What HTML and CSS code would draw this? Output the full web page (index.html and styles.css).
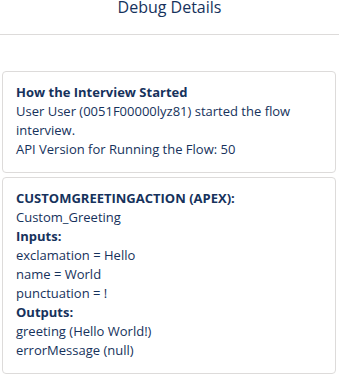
FILE: index.html
```html
<!DOCTYPE html>
<html lang="en">
<head>
<meta charset="utf-8">
<title>Debug Details</title>
<link rel="stylesheet" href="styles.css">
</head>
<body>
<header class="header">
  <h2 class="title">Debug Details</h2>
</header>
<main class="content">
  <section class="card">
    <div class="label">How the Interview Started</div>
    <div>User User (0051F00000lyz81) started the flow interview.</div>
    <div>API Version for Running the Flow: 50</div>
  </section>
  <section class="card">
    <div class="label">CUSTOMGREETINGACTION (APEX):</div>
    <div>Custom_Greeting</div>
    <div class="label">Inputs:</div>
    <div>exclamation = Hello</div>
    <div>name = World</div>
    <div>punctuation = !</div>
    <div class="label">Outputs:</div>
    <div>greeting (Hello World!)</div>
    <div>errorMessage (null)</div>
  </section>
</main>
</body>
</html>
```
FILE: styles.css
```css
html, body {
  margin: 0;
  padding: 0;
  background: #ffffff;
}
body {
  font-family: "Open Sans", "Noto Sans", sans-serif;
  font-size: 13px;
  line-height: 19px;
  color: #16325c;
}
.header {
  border-bottom: 1px solid #dddbda;
  padding-bottom: 20px;
}
.title {
  margin: 0;
  font-size: 16px;
  line-height: 14px;
  font-weight: 400;
  text-align: center;
  color: #16325c;
}
.content {
  display: flex;
  flex-direction: column;
  gap: 4px;
  padding: 36px 3px 0 2px;
}
.card {
  border: 1px solid #dddbda;
  border-radius: 4px;
  padding: 11px 12px 13px 13px;
}
.label {
  font-weight: 700;
}
```
